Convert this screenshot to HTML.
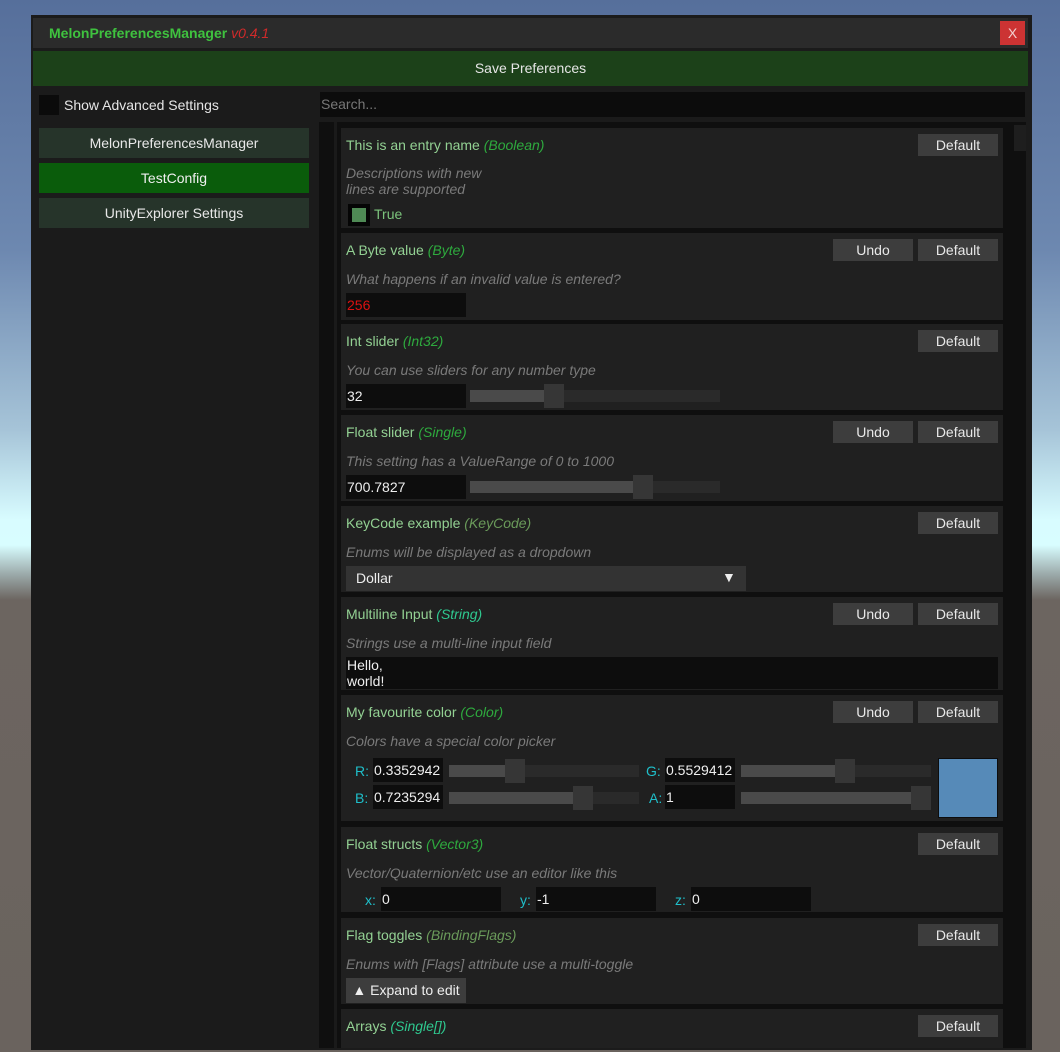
<!DOCTYPE html>
<html><head><meta charset="utf-8">
<style>
*{margin:0;padding:0;box-sizing:border-box}
body{width:1060px;height:1052px;overflow:hidden;position:relative;font-family:"Liberation Sans",sans-serif;font-size:14px;color:#ddd;
background:linear-gradient(180deg,#566f9b 0px,#6d88b0 250px,#a6c4d8 430px,#d8fcff 520px,#d8fdff 545px,#9aa8a8 575px,#6c6560 600px,#6a635e 1052px)}
.a{position:absolute}
.win{left:31px;top:15px;width:1001px;height:1035px;background:#1b1b1b}
.t{white-space:nowrap}
.entry{position:absolute;left:341px;width:662px;background:#202020}
.name{position:absolute;left:5px;top:9px;color:#93d193;font-size:14px}
.name i{color:#2eaa3e}
.desc{position:absolute;left:5px;color:#7a7a7a;font-style:italic;font-size:14px;line-height:16px}
.btn{position:absolute;top:6px;width:80px;height:22px;background:#3d3d3d;color:#e8e8e8;text-align:center;line-height:22px;font-size:14px}
.def{left:577px}.undo{left:492px}
.inp{position:absolute;background:#0d0d0d;color:#eee;height:24px;line-height:24px;padding-left:1px;font-size:14px}
.sl{position:absolute;height:12px;background:#2a2a2a}
.sl b{position:absolute;left:0;top:0;height:12px;background:#4a4a4a}
.sl s{position:absolute;top:-6px;width:20px;height:24px;background:#363636}
.lab{position:absolute;color:#1fbfca;font-size:14px}
</style></head><body>
<div class="a win"></div>
<div class="a" style="left:33px;top:18px;width:995px;height:30px;background:#2b2b2b"></div>
<div class="a t" style="left:49px;top:25px;font-weight:bold;color:#3fc23f;font-size:14px">MelonPreferencesManager <i style="color:#d02a2a;font-weight:normal">v0.4.1</i></div>
<div class="a" style="left:1000px;top:21px;width:25px;height:24px;background:#cc3333;color:#f2d0d0;text-align:center;line-height:24px;font-size:14px">X</div>
<div class="a" style="left:33px;top:51px;width:995px;height:35px;background:#1c4119"></div>
<div class="a t" style="left:33px;top:60px;width:995px;text-align:center;color:#e6e6e6">Save Preferences</div>

<div class="a" style="left:39px;top:95px;width:20px;height:20px;background:#0b0b0b"></div>
<div class="a t" style="left:64px;top:97px;color:#e6e6e6">Show Advanced Settings</div>
<div class="a t" style="left:320px;top:92px;width:705px;height:25px;background:#0c0c0c;color:#777;line-height:25px;padding-left:1px">Search...</div>

<div class="a t" style="left:39px;top:128px;width:270px;height:30px;background:#26342a;color:#e8e8e8;text-align:center;line-height:30px">MelonPreferencesManager</div>
<div class="a t" style="left:39px;top:163px;width:270px;height:30px;background:#0a5c0b;color:#f0f0f0;text-align:center;line-height:30px">TestConfig</div>
<div class="a t" style="left:39px;top:198px;width:270px;height:30px;background:#26342a;color:#e8e8e8;text-align:center;line-height:30px">UnityExplorer Settings</div>

<div class="a" style="left:319px;top:122px;width:707px;height:926px;background:#0f0f0f"></div>
<div class="a" style="left:334px;top:122px;width:3px;height:926px;background:#1a1a1a"></div>
<div class="a" style="left:1014px;top:125px;width:12px;height:26px;background:#1e1e1e"></div>

<div class="entry t" style="top:128px;height:100px">
 <div class="name">This is an entry name <i>(Boolean)</i></div>
 <div class="btn def">Default</div>
 <div class="desc" style="top:37px">Descriptions with new<br>lines are supported</div>
 <div class="a" style="left:7px;top:76px;width:22px;height:22px;background:#050505"></div>
 <div class="a" style="left:11px;top:80px;width:14px;height:14px;background:#4f8a55"></div>
 <div class="a" style="left:33px;top:78px;color:#7cc47c">True</div>
</div>

<div class="entry t" style="top:233px;height:87px">
 <div class="name">A Byte value <i>(Byte)</i></div>
 <div class="btn undo">Undo</div><div class="btn def">Default</div>
 <div class="desc" style="top:38px">What happens if an invalid value is entered?</div>
 <div class="inp" style="left:5px;top:60px;width:120px;color:#dd1111">256</div>
</div>

<div class="entry t" style="top:324px;height:86px">
 <div class="name">Int slider <i>(Int32)</i></div>
 <div class="btn def">Default</div>
 <div class="desc" style="top:38px">You can use sliders for any number type</div>
 <div class="inp" style="left:5px;top:60px;width:120px">32</div>
 <div class="sl" style="left:129px;top:66px;width:250px"><b style="width:84px"></b><s style="left:74px"></s></div>
</div>

<div class="entry t" style="top:415px;height:86px">
 <div class="name">Float slider <i>(Single)</i></div>
 <div class="btn undo">Undo</div><div class="btn def">Default</div>
 <div class="desc" style="top:38px">This setting has a ValueRange of 0 to 1000</div>
 <div class="inp" style="left:5px;top:60px;width:120px">700.7827</div>
 <div class="sl" style="left:129px;top:66px;width:250px"><b style="width:173px"></b><s style="left:163px"></s></div>
</div>

<div class="entry t" style="top:506px;height:86px">
 <div class="name">KeyCode example <i style="color:#6a9a5a">(KeyCode)</i></div>
 <div class="btn def">Default</div>
 <div class="desc" style="top:38px">Enums will be displayed as a dropdown</div>
 <div class="a" style="left:5px;top:60px;width:400px;height:25px;background:#333;color:#eee;line-height:25px;padding-left:10px">Dollar<span style="position:absolute;left:376px;top:-1px;font-size:14px">▼</span></div>
</div>

<div class="entry t" style="top:597px;height:93px">
 <div class="name">Multiline Input <i style="color:#2fc88f">(String)</i></div>
 <div class="btn undo">Undo</div><div class="btn def">Default</div>
 <div class="desc" style="top:38px">Strings use a multi-line input field</div>
 <div class="inp" style="left:5px;top:60px;width:652px;height:32px;line-height:16px">Hello,<br>world!</div>
</div>

<div class="entry t" style="top:695px;height:126px">
 <div class="name">My favourite color <i>(Color)</i></div>
 <div class="btn undo">Undo</div><div class="btn def">Default</div>
 <div class="desc" style="top:38px">Colors have a special color picker</div>
 <div class="lab" style="left:14px;top:68px">R:</div>
 <div class="inp" style="left:32px;top:63px;width:70px">0.3352942</div>
 <div class="sl" style="left:108px;top:70px;width:190px"><b style="width:56px"></b><s style="left:56px"></s></div>
 <div class="lab" style="left:305px;top:68px">G:</div>
 <div class="inp" style="left:324px;top:63px;width:70px">0.5529412</div>
 <div class="sl" style="left:400px;top:70px;width:190px"><b style="width:94px"></b><s style="left:94px"></s></div>
 <div class="lab" style="left:14px;top:95px">B:</div>
 <div class="inp" style="left:32px;top:90px;width:70px">0.7235294</div>
 <div class="sl" style="left:108px;top:97px;width:190px"><b style="width:124px"></b><s style="left:124px"></s></div>
 <div class="lab" style="left:308px;top:95px">A:</div>
 <div class="inp" style="left:324px;top:90px;width:70px">1</div>
 <div class="sl" style="left:400px;top:97px;width:190px"><b style="width:170px"></b><s style="left:170px"></s></div>
 <div class="a" style="left:597px;top:63px;width:60px;height:60px;background:#0d0d0d"></div>
 <div class="a" style="left:598px;top:64px;width:58px;height:58px;background:#568ab8"></div>
</div>

<div class="entry t" style="top:827px;height:85px">
 <div class="name">Float structs <i>(Vector3)</i></div>
 <div class="btn def">Default</div>
 <div class="desc" style="top:38px">Vector/Quaternion/etc use an editor like this</div>
 <div class="lab" style="left:24px;top:65px">x:</div>
 <div class="inp" style="left:40px;top:60px;width:120px">0</div>
 <div class="lab" style="left:179px;top:65px">y:</div>
 <div class="inp" style="left:195px;top:60px;width:120px">-1</div>
 <div class="lab" style="left:334px;top:65px">z:</div>
 <div class="inp" style="left:350px;top:60px;width:120px">0</div>
</div>

<div class="entry t" style="top:918px;height:86px">
 <div class="name">Flag toggles <i style="color:#6a9a5a">(BindingFlags)</i></div>
 <div class="btn def">Default</div>
 <div class="desc" style="top:38px">Enums with [Flags] attribute use a multi-toggle</div>
 <div class="a" style="left:5px;top:60px;width:120px;height:25px;background:#3d3d3d;color:#eee;line-height:25px;text-align:center">▲ Expand to edit</div>
</div>

<div class="entry t" style="top:1009px;height:39px">
 <div class="name">Arrays <i style="color:#2fc88f">(Single[])</i></div>
 <div class="btn def">Default</div>
</div>
</body></html>
